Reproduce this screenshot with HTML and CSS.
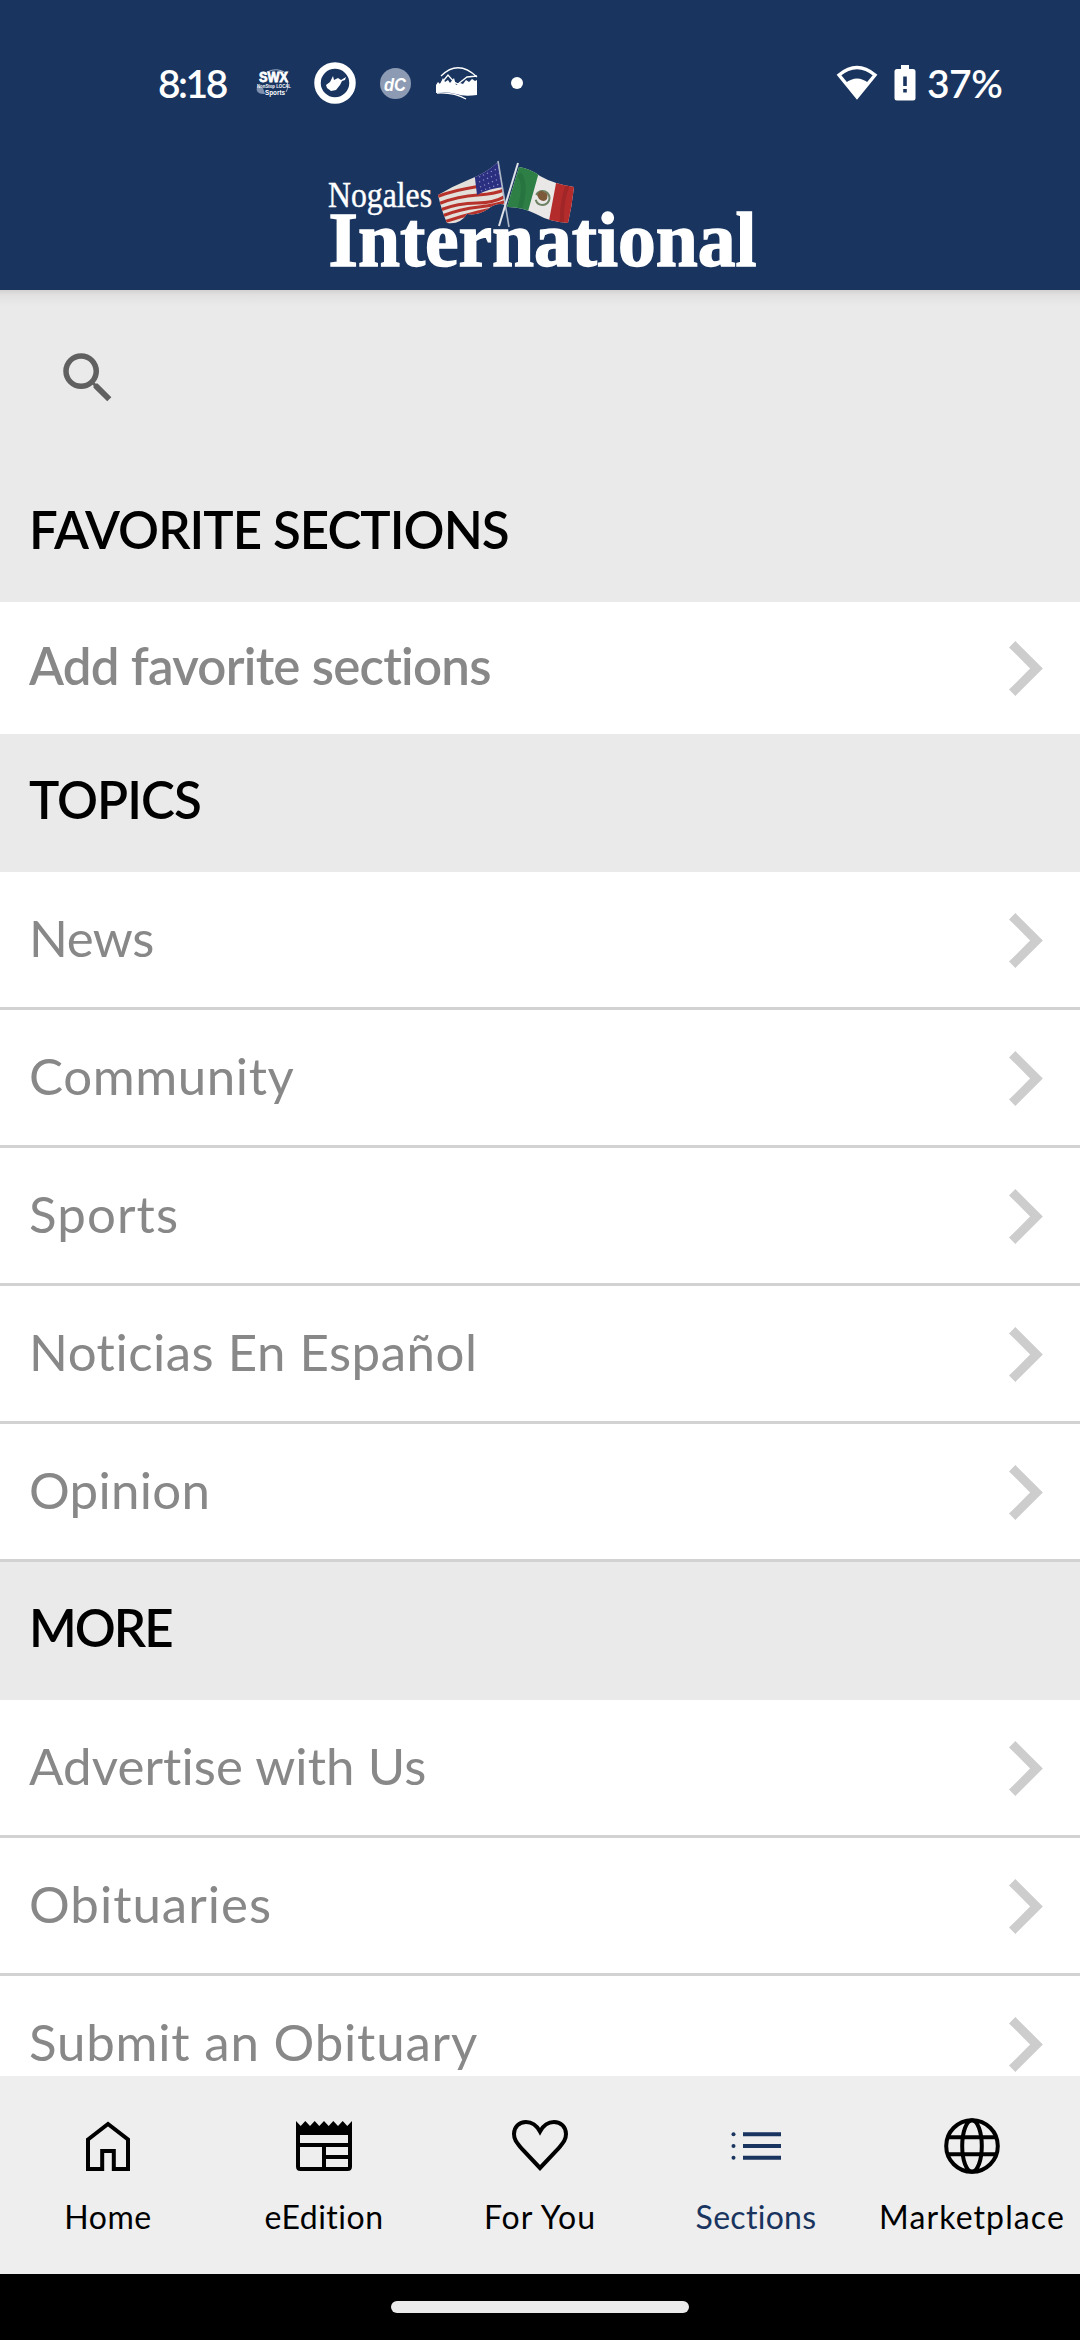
FILE: index.html
```html
<!DOCTYPE html>
<html lang="en">
<head>
    <meta charset="UTF-8">
    <meta name="viewport" content="width=device-width, initial-scale=1.0">
    <title>Nogales International</title>
    <link rel="stylesheet" href="styles.css">
</head>
<body>
    <header class="header">
        <!-- status bar -->
        <div class="status">
            <span class="time">8:18</span>
            <svg class="swx" width="38" height="30" viewBox="0 0 38 30">
                <path d="M12 4 Q22 -1 31 5 M30 8 Q35 18 31 24" fill="none" stroke="#9fb0ca" stroke-width="1"/>
                <path d="M2 18 Q0 27 10 26 L8 20Z" fill="#7f90af"/>
                <text class="heavy" x="4" y="14" font-size="14" font-weight="900" textLength="29" lengthAdjust="spacingAndGlyphs">SWX</text>
                <text x="2" y="20" font-size="6" font-weight="700" textLength="34" lengthAdjust="spacingAndGlyphs">NonStop LOCAL</text>
                <text x="10" y="27" font-size="8" font-weight="900" textLength="20" lengthAdjust="spacingAndGlyphs">Sports</text>
            </svg>
            <svg class="state" width="42" height="42" viewBox="0 0 42 42">
                <circle cx="21" cy="21" r="17.5" fill="none" stroke="#fff" stroke-width="6.5"/>
                <path d="M12 23 L16 20 L19 14 L20 18 L24 16 L27 18 L32 15 L31 18 L28 19 L26 23 L22 28 L17 29 L13 26Z" fill="#fff"/>
            </svg>
            <svg class="dc" width="31" height="31" viewBox="0 0 31 31">
                <circle cx="15.5" cy="15.5" r="15.5" fill="#8c9bb3"/>
                <text x="4" y="22.500" font-size="18" font-weight="700" font-style="italic" textLength="22" lengthAdjust="spacingAndGlyphs">dC</text>
            </svg>
            <svg class="peaks" width="42" height="36" viewBox="0 0 42 36">
                <path d="M5 11 Q22 -6 41 12 M4 20 L12 10 L18 17 L22 19 L31 12 L41 11 M1 28 Q18 27 30 34" fill="none" stroke="#fff" stroke-width="1.300"/>
                <path d="M0 28 V20 L2 17 L4 19 L7 13 L9 17 L12 15 L14 18 L18 13 L20 20 L24 18 L27 19 L30 15 L33 17 L36 14 L39 16 L41 15 V30 Q28 32 20 29 Q10 26 0 28Z" fill="#fff"/>
            </svg>
            <span class="dot"></span>
            <svg class="wifi" width="42" height="36" viewBox="0 0 42 36">
                <path d="M3 10 Q21 -5 39 10 L21 32Z" fill="none" stroke="#fff" stroke-width="3.400"/>
                <path d="M9.500 18 Q21 9 32.500 18 L21 33Z" fill="#fff"/>
            </svg>
            <svg class="battery" width="22" height="36" viewBox="0 0 22 36">
                <path d="M7 0 H15 V4 H19 Q21.500 4 21.500 6.500 V33 Q21.500 35.500 19 35.500 H3 Q.5 35.500 .5 33 V6.500 Q.5 4 3 4 H7Z" fill="#fff"/>
                <path d="M9.200 11.500 H12.800 V21 H9.200Z M9.200 24 H12.800 V27.500 H9.200Z" fill="#19355f"/>
            </svg>
            <span class="percent">37%</span>
        </div>
        <!-- masthead -->
        <div class="masthead">
            <svg width="460" height="160" viewBox="0 -20 460 160">
                <defs>
                    <clipPath id="us"><path d="M188 12 Q177 23 158 30 Q143 36 128 45 Q132 62 137 73 Q150 75 157 64 Q168 66 178 59 Q187 52 195 55Z"/></clipPath>
                    <clipPath id="mx"><path d="M209 17 Q221 19 230 26 Q244 34 264 37 Q262 56 258 73 Q240 72 226 64 Q212 57 197 57Z"/></clipPath>
                </defs>
                <g clip-path="url(#us)">
                    <path d="M120 0 H200 V80 H120Z" fill="#e3dfdb"/>
                    <path d="M126 47 Q145 40 165 37 T197 29 M128 54 Q148 46 168 45 T198 38 M130 60 Q148 53 167 53 T199 44 M132 66 Q150 59 169 57 T199 50 M134 72 Q152 66 168 62 T199 56" fill="none" stroke="#b8322c" stroke-width="3.200"/>
                    <path d="M164 20 L188 10 L194 37 Q180 38 167 45Z" fill="#2b2f80"/>
                    <path d="M169 27 L189 18 M169 32 L190 23 M170 37 L191 28 M171 41 L192 33" stroke="#8d8fc4" stroke-width="1.200" stroke-dasharray="1.300 3"/>
                </g>
                <g clip-path="url(#mx)">
                    <path d="M190 0 H270 V80 H190Z" fill="#e9e8e6"/>
                    <path d="M190 10 L229 22 L217 65 L190 65Z" fill="#2d7f45"/>
                    <path d="M247 28 L270 30 V80 L238 76Z" fill="#b42b2c"/>
                    <path d="M209 24 Q217 33 210 58" fill="none" stroke="#23693b" stroke-width="5" opacity=".5"/>
                    <path d="M258 34 Q251 52 252 74" fill="none" stroke="#8d2224" stroke-width="4" opacity=".5"/>
                    <circle cx="232.500" cy="48" r="7" fill="none" stroke="#6d8163" stroke-width="2" stroke-dasharray="20 5"/>
                    <path d="M227 45 Q230 39 234 42 Q239 43 237 49 Q234 53 229 49Z" fill="#7b5939"/>
                </g>
                <path d="M188 11 L199 77" stroke="#aeb7c7" stroke-width="1.600"/>
                <path d="M208 13 L189 76" stroke="#dfe2e8" stroke-width="2"/>
                <text class="logo_small" x="18" y="57" textLength="104" lengthAdjust="spacingAndGlyphs">Nogales</text>
                <text class="logo_big" x="18.500" y="116" textLength="428" lengthAdjust="spacingAndGlyphs">International</text>
            </svg>
        </div>
    </header>

    <main class="content">
        <div class="search">
            <svg width="66" height="66" viewBox="0 0 24 24"><path d="M15.500 14h-.79l-.28-.27A6.471 6.471 0 0 0 16 9.500 6.500 6.500 0 1 0 9.500 16c1.610 0 3.090-.59 4.230-1.570l.27.28v.79l5 4.990L20.490 19l-4.990-5zm-6 0C7.010 14 5 11.990 5 9.500S7.010 5 9.500 5 14 7.010 14 9.500 11.990 14 9.500 14z" fill="#606060"/></svg>
        </div>
        <h2 class="title">FAVORITE SECTIONS</h2>
        <a class="row add"><span>Add favorite sections</span><svg class="arrow" viewBox="0 0 34 55"><path d="M3.200 3.200 L27.500 27.500 L3.200 51.800"/></svg></a>
        <h2 class="title">TOPICS</h2>
        <a class="row"><span class="news">News</span><svg class="arrow" viewBox="0 0 34 55"><path d="M3.200 3.200 L27.500 27.500 L3.200 51.800"/></svg></a>
        <a class="row"><span class="community">Community</span><svg class="arrow" viewBox="0 0 34 55"><path d="M3.200 3.200 L27.500 27.500 L3.200 51.800"/></svg></a>
        <a class="row"><span class="sports">Sports</span><svg class="arrow" viewBox="0 0 34 55"><path d="M3.200 3.200 L27.500 27.500 L3.200 51.800"/></svg></a>
        <a class="row"><span class="noticias">Noticias En Español</span><svg class="arrow" viewBox="0 0 34 55"><path d="M3.200 3.200 L27.500 27.500 L3.200 51.800"/></svg></a>
        <a class="row"><span class="opinion">Opinion</span><svg class="arrow" viewBox="0 0 34 55"><path d="M3.200 3.200 L27.500 27.500 L3.200 51.800"/></svg></a>
        <h2 class="title more">MORE</h2>
        <a class="row"><span class="advertise">Advertise with Us</span><svg class="arrow" viewBox="0 0 34 55"><path d="M3.200 3.200 L27.500 27.500 L3.200 51.800"/></svg></a>
        <a class="row"><span class="obituaries">Obituaries</span><svg class="arrow" viewBox="0 0 34 55"><path d="M3.200 3.200 L27.500 27.500 L3.200 51.800"/></svg></a>
        <a class="row"><span class="submit">Submit an Obituary</span><svg class="arrow" viewBox="0 0 34 55"><path d="M3.200 3.200 L27.500 27.500 L3.200 51.800"/></svg></a>
    </main>

    <nav class="tabs">
        <a class="tab">
            <svg viewBox="0 0 60 60"><path d="M10 23.500 L30 8 L50 23.500 V53 H35.800 V35 H24.200 V53 H10Z"/></svg>
            <span>Home</span>
        </a>
        <a class="tab">
            <svg viewBox="0 0 60 60">
                <path class="fill" d="M2 5 L6.700 10 L11.300 5 L16 10 L20.700 5 L25.300 10 L30 5 L34.700 10 L39.300 5 L44 10 L48.700 5 L53.300 10 L58 5 V19 H2Z"/>
                <path d="M4 18 V50.500 Q4 53 6.500 53 H53.500 Q56 53 56 50.500 V18 M4 29 H56 M30 29 V53 M30 41 H56"/>
            </svg>
            <span>eEdition</span>
        </a>
        <a class="tab">
            <svg viewBox="0 0 60 60"><path d="M30 52 L12 33 C6 26 4 23 4 18 C4 11 9 6 16 6 C23 6 27 10 30 15.500 C33 10 37 6 44 6 C51 6 56 11 56 18 C56 23 54 26 48 33Z"/></svg>
            <span class="t_you">For You</span>
        </a>
        <a class="tab active">
            <svg viewBox="0 0 60 60">
                <path d="M17 18.300 H55 M17 30 H55 M17 41.700 H55"/>
                <circle class="fill" cx="7.500" cy="18.300" r="2"/><circle class="fill" cx="7.500" cy="30" r="2"/><circle class="fill" cx="7.500" cy="41.700" r="2"/>
            </svg>
            <span class="t_sections">Sections</span>
        </a>
        <a class="tab">
            <svg viewBox="0 0 60 60"><circle cx="30" cy="30" r="25.800"/><ellipse cx="30" cy="30" rx="9.800" ry="25.800"/><path d="M6 21.300 H54 M6 38.300 H54"/></svg>
            <span class="t_market">Marketplace</span>
        </a>
    </nav>
    <div class="gesture"><span class="pill"></span></div>
</body>
</html>
```
FILE: styles.css
```css
* {
    box-sizing: border-box;
}
body {
    margin: 0;
    width: 1080px;
    height: 2340px;
    display: flex;
    flex-direction: column;
    overflow: hidden;
    background-color: white;
    font-family: Lato, "Liberation Sans", sans-serif;
    font-variant-ligatures: none;
}
/* header */
.header {
    flex: none;
    height: 290px;
    background-color: #19355f;
    color: white;
}
.header svg {
    overflow: visible;
}
.status {
    display: flex;
    align-items: center;
    height: 130px;
    padding: 36px 78px 0 158px;
    font-size: 39px;
    font-weight: 600;
}
.status svg, .status span {
    flex: none;
}
.status text {
    fill: white;
    font-family: "Liberation Sans", sans-serif;
}
.status .heavy {
    stroke: white;
    stroke-width: .8;
}
.time {
    width: 71px;
    letter-spacing: -2.5px;
}
.swx {
    margin: 0 21px 0 26px;
}
.state {
    margin-right: 24px;
}
.dc {
    margin-right: 25px;
}
.peaks {
    margin-right: 33px;
}
.dot {
    width: 12px;
    height: 12px;
    border-radius: 50%;
    background-color: white;
}
.wifi {
    margin-left: auto;
    margin-right: 16px;
}
.battery {
    margin-right: 11px;
}
.percent {
    width: 75px;
    letter-spacing: -0.5px;
}
.masthead {
    display: flex;
    justify-content: center;
    height: 160px;
}
.masthead text {
    fill: white;
    stroke: white;
    font-family: "Liberation Serif", serif;
}
.logo_small {
    font-size: 36px;
    stroke-width: .4;
}
.logo_big {
    font-size: 79px;
    font-weight: bold;
    stroke-width: 1.5;
}
/* section list */
.content {
    flex: 1;
    min-height: 0;
    overflow: hidden;
}
.search {
    height: 174px;
    padding: 55px 0 0 55px;
    background: linear-gradient(#d2d2d2, #e1e1e1 5px, #eaeaea 16px);
}
.title {
    display: flex;
    align-items: center;
    height: 138px;
    margin: 0;
    padding: 0 29px 7px;
    background-color: #eaeaea;
    color: black;
    font-size: 51px;
    font-weight: 600;
    letter-spacing: -0.95px;
}
.more {
    letter-spacing: -2px;
}
.row {
    display: flex;
    align-items: center;
    justify-content: space-between;
    height: 138px;
    padding: 1px 37px 0 29px;
    border-bottom: 3px solid #d2d2d2;
    color: #888;
    font-size: 51px;
}
.row span {
    padding-bottom: 5px;
}
.add {
    height: 132px;
    border-bottom: 0;
    font-weight: 600;
    letter-spacing: -0.75px;
}
.row.add span {
    padding-bottom: 7px;
}
/* tracking for each label */
.news {
    letter-spacing: -0.5px;
}
.community {
    letter-spacing: 0.6px;
}
.sports {
    letter-spacing: 1.1px;
}
.noticias {
    letter-spacing: 0.5px;
}
.opinion {
    letter-spacing: 0.3px;
}
.advertise {
    letter-spacing: 0.1px;
}
.obituaries {
    letter-spacing: 1px;
}
.submit {
    letter-spacing: 0.8px;
}
.arrow {
    width: 34px;
    height: 55px;
    fill: none;
    stroke: #cdcdcd;
    stroke-width: 9;
}
/* bottom tabs */
.tabs {
    display: flex;
    flex: none;
    height: 198px;
    background-color: #eee;
}
.tab {
    display: flex;
    flex-direction: column;
    align-items: center;
    width: 216px;
    padding-top: 40px;
    color: black;
    font-size: 32px;
    line-height: 40px;
    letter-spacing: 0.5px;
}
.tab svg {
    width: 60px;
    height: 60px;
    margin-bottom: 21px;
    fill: none;
    stroke: currentColor;
    stroke-width: 4;
}
.tab .fill {
    fill: currentColor;
    stroke: none;
}
.t_you {
    letter-spacing: 1px;
}
.t_sections {
    letter-spacing: 0.3px;
}
.t_market {
    letter-spacing: 1.1px;
}
.active {
    color: #19355f;
}
.gesture {
    display: flex;
    flex: none;
    justify-content: center;
    height: 66px;
    padding-top: 27px;
    background-color: black;
}
.pill {
    width: 298px;
    height: 12px;
    border-radius: 6px;
    background-color: #ebebeb;
}
```
